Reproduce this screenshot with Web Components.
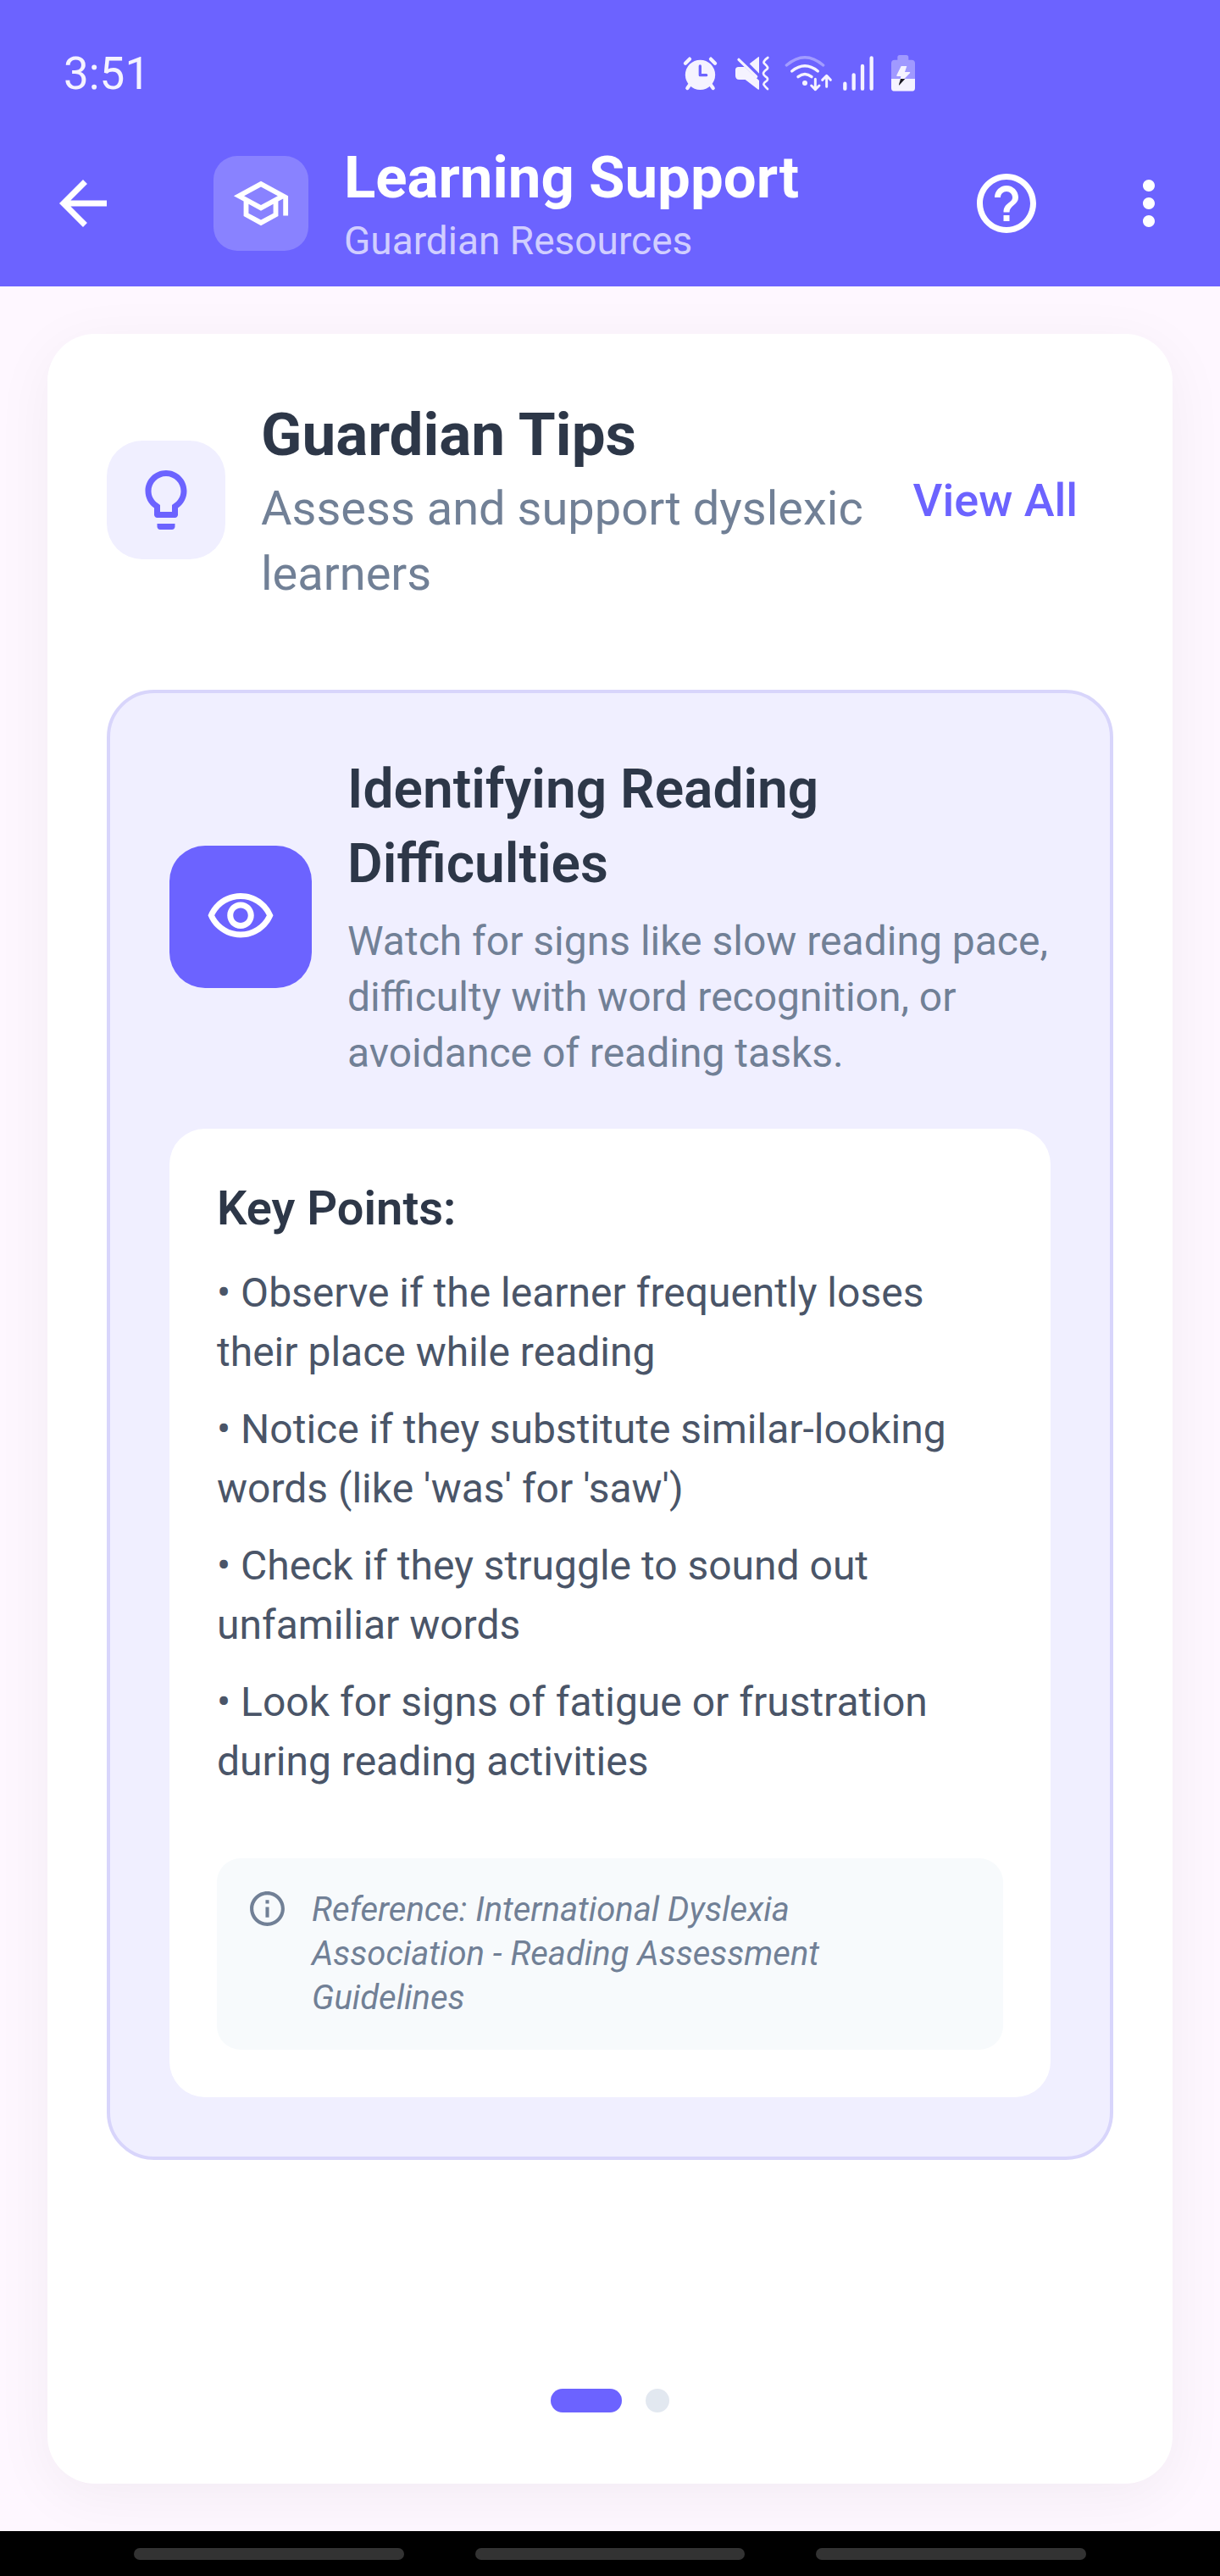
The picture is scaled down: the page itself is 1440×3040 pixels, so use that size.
<!DOCTYPE html>
<html lang="en">
<head>
<meta charset="utf-8">
<meta name="viewport" content="width=device-width, initial-scale=1">
<title>Learning Support</title>
<style>
  :root {
    --primary: #6c63ff;
    --tint: #f0efff;
    --tint-line: #d8d5fb;
    --ink: #2d3748;
    --body: #4a5568;
    --muted: #718096;
    --page: #fef7ff;
  }
  * { box-sizing: border-box; }
  body {
    margin: 0;
    min-height: 100vh;
    display: flex;
    flex-direction: column;
    background: var(--page);
    font-family: Roboto, "Liberation Sans", sans-serif;
    color: var(--ink);
  }
  main { flex: 1; display: flex; flex-direction: column; padding: 56px; }
</style>
</head>
<body>
  <status-bar time="3:51"></status-bar>
  <app-bar>
    <span slot="title">Learning Support</span>
    <span slot="subtitle">Guardian Resources</span>
  </app-bar>
  <main>
    <tips-card>
      <section-head slot="head">
        <span slot="title">Guardian Tips</span>
        <span slot="subtitle">Assess and support dyslexic learners</span>
      </section-head>
      <tip-card>
        <span slot="title">Identifying Reading Difficulties</span>
        <span slot="summary">Watch for signs like slow reading pace, difficulty with word recognition, or avoidance of reading tasks.</span>
        <key-points>
          <key-point>• Observe if the learner frequently loses <br>their place while reading</key-point>
          <key-point>• Notice if they substitute similar-looking words (like 'was' for 'saw')</key-point>
          <key-point>• Check if they struggle to sound out <br>unfamiliar words</key-point>
          <key-point>• Look for signs of fatigue or frustration <br>during reading activities</key-point>
          <source-note slot="note">Reference: International Dyslexia <br>Association - Reading Assessment <br>Guidelines</source-note>
        </key-points>
      </tip-card>
      <page-dots slot="foot"></page-dots>
    </tips-card>
  </main>
  <nav-bar></nav-bar>

<script>
  const reset = '*{box-sizing:border-box;margin:0;padding:0}';
  function define(name, css, html) {
    const template = document.createElement('template');
    template.innerHTML = `<style>${reset}${css}</style>${html}`;
    customElements.define(name, class extends HTMLElement {
      constructor() {
        super();
        this.attachShadow({ mode: 'open' }).append(template.content.cloneNode(true));
      }
      connectedCallback() {
        const clock = this.shadowRoot.querySelector('time');
        if (clock) clock.textContent = this.getAttribute('time');
      }
    });
  }

  const glyphs = {
    back: 'M20 11H7.83l5.59-5.59L12 4l-8 8 8 8 1.41-1.41L7.83 13H20v-2z',
    school: 'M12 3L1 9l4 2.18v6L12 21l7-3.82v-6l2-1.09V17h2V9L12 3zm6.82 6L12 12.72 5.18 9 12 5.28 18.82 9zM17 15.99l-5 2.73-5-2.73v-3.72L12 15l5-2.73v3.72z',
    help: 'M11 18h2v-2h-2v2zm1-16C6.48 2 2 6.48 2 12s4.48 10 10 10 10-4.48 10-10S17.52 2 12 2zm0 18c-4.41 0-8-3.59-8-8s3.59-8 8-8 8 3.59 8 8-3.59 8-8 8zm0-14c-2.21 0-4 1.79-4 4h2c0-1.1.9-2 2-2s2 .9 2 2c0 2-3 1.75-3 5h2c0-2.25 3-2.5 3-5 0-2.21-1.79-4-4-4z',
    more: 'M12 8c1.1 0 2-.9 2-2s-.9-2-2-2-2 .9-2 2 .9 2 2 2zm0 2c-1.1 0-2 .9-2 2s.9 2 2 2 2-.9 2-2-.9-2-2-2zm0 6c-1.1 0-2 .9-2 2s.9 2 2 2 2-.9 2-2-.9-2-2-2z',
    bulb: 'M9 21c0 .55.45 1 1 1h4c.55 0 1-.45 1-1v-1H9v1zm3-19C8.14 2 5 5.14 5 9c0 2.38 1.19 4.47 3 5.74V17c0 .55.45 1 1 1h6c.55 0 1-.45 1-1v-2.26c1.81-1.27 3-3.36 3-5.74 0-3.86-3.14-7-7-7zm2.85 11.1l-.85.6V16h-4v-2.3l-.85-.6C7.8 12.16 7 10.63 7 9c0-2.76 2.24-5 5-5s5 2.24 5 5c0 1.63-.8 3.16-2.15 4.1z',
    eye: 'M12 6c3.79 0 7.17 2.13 8.82 5.5C19.17 14.87 15.79 17 12 17s-7.17-2.13-8.82-5.5C4.83 8.13 8.21 6 12 6m0-2C7 4 2.73 7.11 1 11.5 2.73 15.89 7 19 12 19s9.27-3.11 11-7.5C21.27 7.11 17 4 12 4zm0 5c1.38 0 2.5 1.12 2.5 2.5S13.38 14 12 14s-2.5-1.12-2.5-2.5S10.62 9 12 9m0-2c-2.48 0-4.5 2.02-4.5 4.5S9.52 16 12 16s4.5-2.02 4.5-4.5S14.48 7 12 7z',
    info: 'M11 7h2v2h-2zm0 4h2v6h-2zm1-9C6.48 2 2 6.48 2 12s4.48 10 10 10 10-4.48 10-10S17.52 2 12 2zm0 18c-4.41 0-8-3.59-8-8s3.59-8 8-8 8 3.59 8 8-3.59 8-8 8z'
  };
  customElements.define('ui-icon', class extends HTMLElement {
    constructor() { super(); this.attachShadow({ mode: 'open' }); }
    connectedCallback() {
      const size = this.getAttribute('size') || 84;
      this.shadowRoot.innerHTML = `<style>:host{display:block;flex:none;width:${size}px;height:${size}px}svg{display:block;width:100%;height:100%;fill:currentColor}</style>
        <svg viewBox="0 0 24 24" aria-hidden="true"><path d="${glyphs[this.getAttribute('name')]}"/></svg>`;
    }
  });

  define('status-bar', `
    :host{display:flex;align-items:center;justify-content:space-between;height:142px;padding:32px 358px 0 75px;background:var(--primary);color:#f5f3ff}
    time{font-size:53px;line-height:62px}
    .tray{display:flex;gap:10px}
    svg{display:block;height:46px;fill:#f5f3ff}
    .line{fill:none;stroke:#f5f3ff;stroke-linecap:round;stroke-linejoin:round}
  `, `
    <time></time>
    <div class="tray">
      <svg width="47" viewBox="75 72 141 138" role="img" aria-label="Alarm set">
        <circle cx="139.500" cy="145" r="53"/>
        <path class="line" stroke-width="13" d="M87 104l15-15M192 104l-15-15M102 181l-8 11M177 181l8 11"/>
        <path d="M139 114v32h22" fill="none" stroke="#6c63ff" stroke-width="10" stroke-linecap="round" stroke-linejoin="round"/>
      </svg>
      <svg width="52" viewBox="246 72 156 138" role="img" aria-label="Vibrate">
        <path d="M314 106l32-25q2-1 2 2v57z"/>
        <path d="M264 128q0-11 11-11h21l52 48v30q0 3-3 2l-46-35h-21q-14 0-14-14z"/>
        <path class="line" stroke-width="10" d="M276 91l62 60"/>
        <path class="line" stroke-width="8" d="M379 84q-10 6-14 14-2 5 4 9 6 5 9 11 2 5-5 9-10 8-10 13t8 11q8 5 7 10t-7 8q-7 5-7 9t14 17"/>
      </svg>
      <svg width="59" viewBox="432 72 177 138" role="img" aria-label="Wi-Fi">
        <path class="line" stroke-width="10" stroke-opacity=".4" d="M445 111q65-56 130 0"/>
        <path class="line" stroke-width="10" d="M464 132q46-37 92 0M486 152q24-19 48 0"/>
        <circle cx="510" cy="174" r="9"/>
        <path class="line" stroke-width="9" d="M547 160v37M533 183l14 14 14-14M587 187v-38M572 163l15-15 14 15"/>
      </svg>
      <svg width="41" viewBox="639 72 123 138" role="img" aria-label="Signal">
        <path class="line" stroke-width="13" d="M652 176v18M683 145v49M714 114v80M746 85v109"/>
      </svg>
      <svg width="38" viewBox="792 72 114 138" role="img" aria-label="Charging">
        <path fill-opacity=".38" d="M838 92v-9q0-8 8-8h23q8 0 8 8v9h11q12 0 12 12v88q0 12-12 12h-60q-12 0-12-12v-88q0-12 12-12z"/>
        <path d="M816 159h84v32q0 11-11 11h-62q-11 0-11-11z"/>
        <path d="M851 114h20l-7 21h17q3 0 1 4l-20 20h-14l2-9h-13q-3-1-2-4z"/>
        <path fill="#1c1b24" d="M849 159h16l-20 22q-3 2-2-2z"/>
      </svg>
    </div>`);

  define('app-bar', `
    :host{display:flex;align-items:center;height:196px;background:var(--primary);color:#fff}
    button{display:flex;align-items:center;justify-content:center;width:168px;height:168px;border:0;background:none;color:inherit;flex:none}
    .back{width:196px}
    .badge{display:flex;align-items:center;justify-content:center;flex:none;width:112px;height:112px;margin-left:56px;border-radius:28px;background:rgba(255,255,255,.2)}
    .text{flex:1;min-width:0;padding-left:42px}
    h1{font-size:69px;line-height:89px;font-weight:700}
    p{font-size:46px;line-height:61px;color:rgba(255,255,255,.7)}
  `, `
    <button class="back" aria-label="Back"><ui-icon name="back"></ui-icon></button>
    <div class="badge"><ui-icon name="school" size="70"></ui-icon></div>
    <div class="text"><h1><slot name="title"></slot></h1><p><slot name="subtitle"></slot></p></div>
    <button aria-label="Help"><ui-icon name="help"></ui-icon></button>
    <button aria-label="More options"><ui-icon name="more"></ui-icon></button>`);

  define('tips-card', `
    :host{flex:1;display:flex;flex-direction:column;padding:70px;border-radius:56px;background:#fff;box-shadow:0 14px 70px rgba(0,0,0,.05)}
    .stage{flex:1;padding-top:98px}
  `, `<slot name="head"></slot><div class="stage"><slot></slot></div><slot name="foot"></slot>`);

  define('section-head', `
    :host{display:flex;align-items:center;gap:42px}
    .badge{display:flex;align-items:center;justify-content:center;flex:none;width:140px;height:140px;border-radius:42px;background:var(--tint);color:var(--primary)}
    .text{flex:1;min-width:0}
    h2{font-size:71px;line-height:98px;font-weight:700}
    p{font-size:56px;line-height:77px;color:var(--muted)}
    a{flex:none;padding:28px 42px 28px 0;font-size:54px;line-height:77px;font-weight:500;color:var(--primary);text-decoration:none}
  `, `
    <div class="badge"><ui-icon name="bulb"></ui-icon></div>
    <div class="text"><h2><slot name="title"></slot></h2><p><slot name="subtitle"></slot></p></div>
    <a href="#all">View All</a>`);

  define('tip-card', `
    :host{display:block;padding:70px;border:4px solid var(--tint-line);border-radius:56px;background:var(--tint)}
    header{display:flex;align-items:center;gap:42px;margin-bottom:56px}
    .badge{display:flex;align-items:center;justify-content:center;flex:none;width:168px;height:168px;border-radius:42px;background:var(--primary);color:#fff}
    .text{flex:1;min-width:0}
    h3{font-size:64px;line-height:88px;font-weight:600;margin-bottom:14px}
    p{font-size:48px;line-height:66px;color:var(--muted)}
  `, `
    <header>
      <div class="badge"><ui-icon name="eye"></ui-icon></div>
      <div class="text"><h3><slot name="title"></slot></h3><p><slot name="summary"></slot></p></div>
    </header>
    <slot></slot>`);

  define('key-points', `
    :host{display:block;padding:56px;border-radius:42px;background:#fff}
    h4{font-size:56px;line-height:77px;font-weight:600;margin-bottom:26px}
    .list{display:flex;flex-direction:column;gap:21px;margin-bottom:79px}
  `, `<h4>Key Points:</h4><div class="list"><slot></slot></div><slot name="note"></slot>`);

  define('key-point', `
    :host{display:block;font-size:48px;line-height:70px;color:var(--body)}
  `, `<slot></slot>`);

  define('source-note', `
    :host{display:flex;align-items:flex-start;gap:28px;padding:35px;border-radius:28px;background:#f7fafc;color:var(--muted)}
    p{flex:1;font-size:40px;line-height:52px;font-style:italic}
  `, `<ui-icon name="info" size="49"></ui-icon><p><slot></slot></p>`);

  define('page-dots', `
    :host{display:flex;justify-content:center;gap:28px;padding-bottom:14px}
    button{width:28px;height:28px;border:0;border-radius:14px;background:#e2e8f0}
    [aria-current]{width:84px;background:var(--primary)}
  `, `<button aria-label="Tip 1" aria-current="true"></button><button aria-label="Tip 2"></button>`);

  define('nav-bar', `
    :host{display:flex;justify-content:center;align-items:center;gap:84px;height:53px;padding:0 158px;background:#000}
    button{flex:1;height:14px;border:0;border-radius:7px;background:#333}
  `, `<button aria-label="Recent apps"></button><button aria-label="Home"></button><button aria-label="Back"></button>`);
</script>
</body>
</html>
